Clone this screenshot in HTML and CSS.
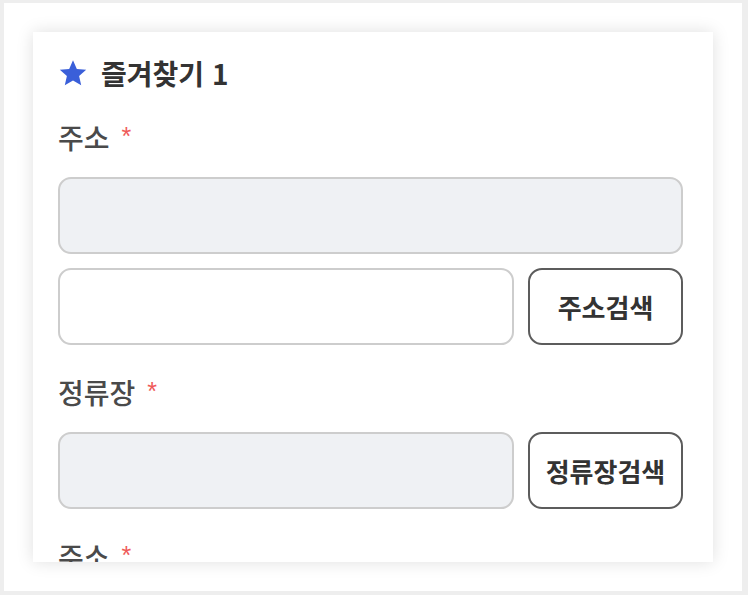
FILE: index.html
```html
<!DOCTYPE html>
<html lang="ko">
<head>
<meta charset="utf-8">
<title>즐겨찾기</title>
<link rel="stylesheet" href="styles.css">
</head>
<body>
<div class="frame">
  <div class="card">
    <div class="title">
      <svg class="star" viewBox="0 0 24 24" width="30" height="30" aria-hidden="true">
        <path d="M12 1.8l3.05 6.9 7.5.7-5.67 4.98 1.68 7.37L12 17.9l-6.56 3.85 1.68-7.37L1.45 9.4l7.5-.7z" fill="#3a5fd9"/>
      </svg>
      <span class="title-text">즐겨찾기 1</span>
    </div>

    <div class="group">
      <div class="label">주소<span class="req">*</span></div>
      <div class="stack">
        <div class="input disabled"></div>
        <div class="row">
          <div class="input"></div>
          <button class="btn" type="button">주소검색</button>
        </div>
      </div>
    </div>

    <div class="group">
      <div class="label">정류장<span class="req">*</span></div>
      <div class="row">
        <div class="input disabled"></div>
        <button class="btn" type="button">정류장검색</button>
      </div>
    </div>

    <div class="group">
      <div class="label">주소<span class="req">*</span></div>
    </div>
  </div>
</div>
</body>
</html>
```

FILE: styles.css
```css
* { box-sizing: border-box; }
html, body { margin: 0; padding: 0; }
body {
  width: 748px;
  height: 595px;
  background: #eeeeee;
  font-family: "Noto Sans CJK KR", "Noto Sans", sans-serif;
  overflow: hidden;
  padding: 3px 6px 4px 4px;
}
.frame {
  width: 738px;
  height: 588px;
  background: #ffffff;
  padding: 29px;
}
.card {
  width: 680px;
  height: 530px;
  background: #ffffff;
  box-shadow: 0 0 16px rgba(0, 0, 0, 0.13);
  padding: 26px 30px 0 25px;
  overflow: hidden;
  display: flex;
  flex-direction: column;
}
.title {
  display: flex;
  align-items: center;
  gap: 13px;
  height: 30px;
}
.star { display: block; flex: none; }
.title-text {
  font-size: 28px;
  font-weight: 700;
  color: #333333;
  line-height: 30px;
}
.group { margin-top: 34px; }
.group + .group { margin-top: 32px; }
.label {
  font-size: 28px;
  font-weight: 500;
  color: #4a4a4a;
  line-height: 30px;
  height: 30px;
  margin-bottom: 25px;
  display: flex;
  align-items: flex-start;
}
.req {
  color: #ef5a5a;
  font-family: "Liberation Sans", sans-serif;
  font-size: 25px;
  line-height: 24px;
  margin-left: 12px;
  margin-top: 2px;
}
.stack {
  display: flex;
  flex-direction: column;
  gap: 14px;
}
.row {
  display: flex;
  gap: 14px;
}
.input {
  flex: 1;
  height: 77px;
  border: 2px solid #cdcdcd;
  border-radius: 13px;
  background: #ffffff;
}
.stack > .input { flex: none; }
.input.disabled { background: #eff1f4; }
.btn {
  flex: none;
  width: 155px;
  height: 77px;
  border: 2px solid #5c5c5c;
  border-radius: 14px;
  background: #ffffff;
  font-family: "Noto Sans CJK KR", "Noto Sans", sans-serif;
  font-size: 26px;
  font-weight: 700;
  color: #333333;
  padding: 0;
}
```
